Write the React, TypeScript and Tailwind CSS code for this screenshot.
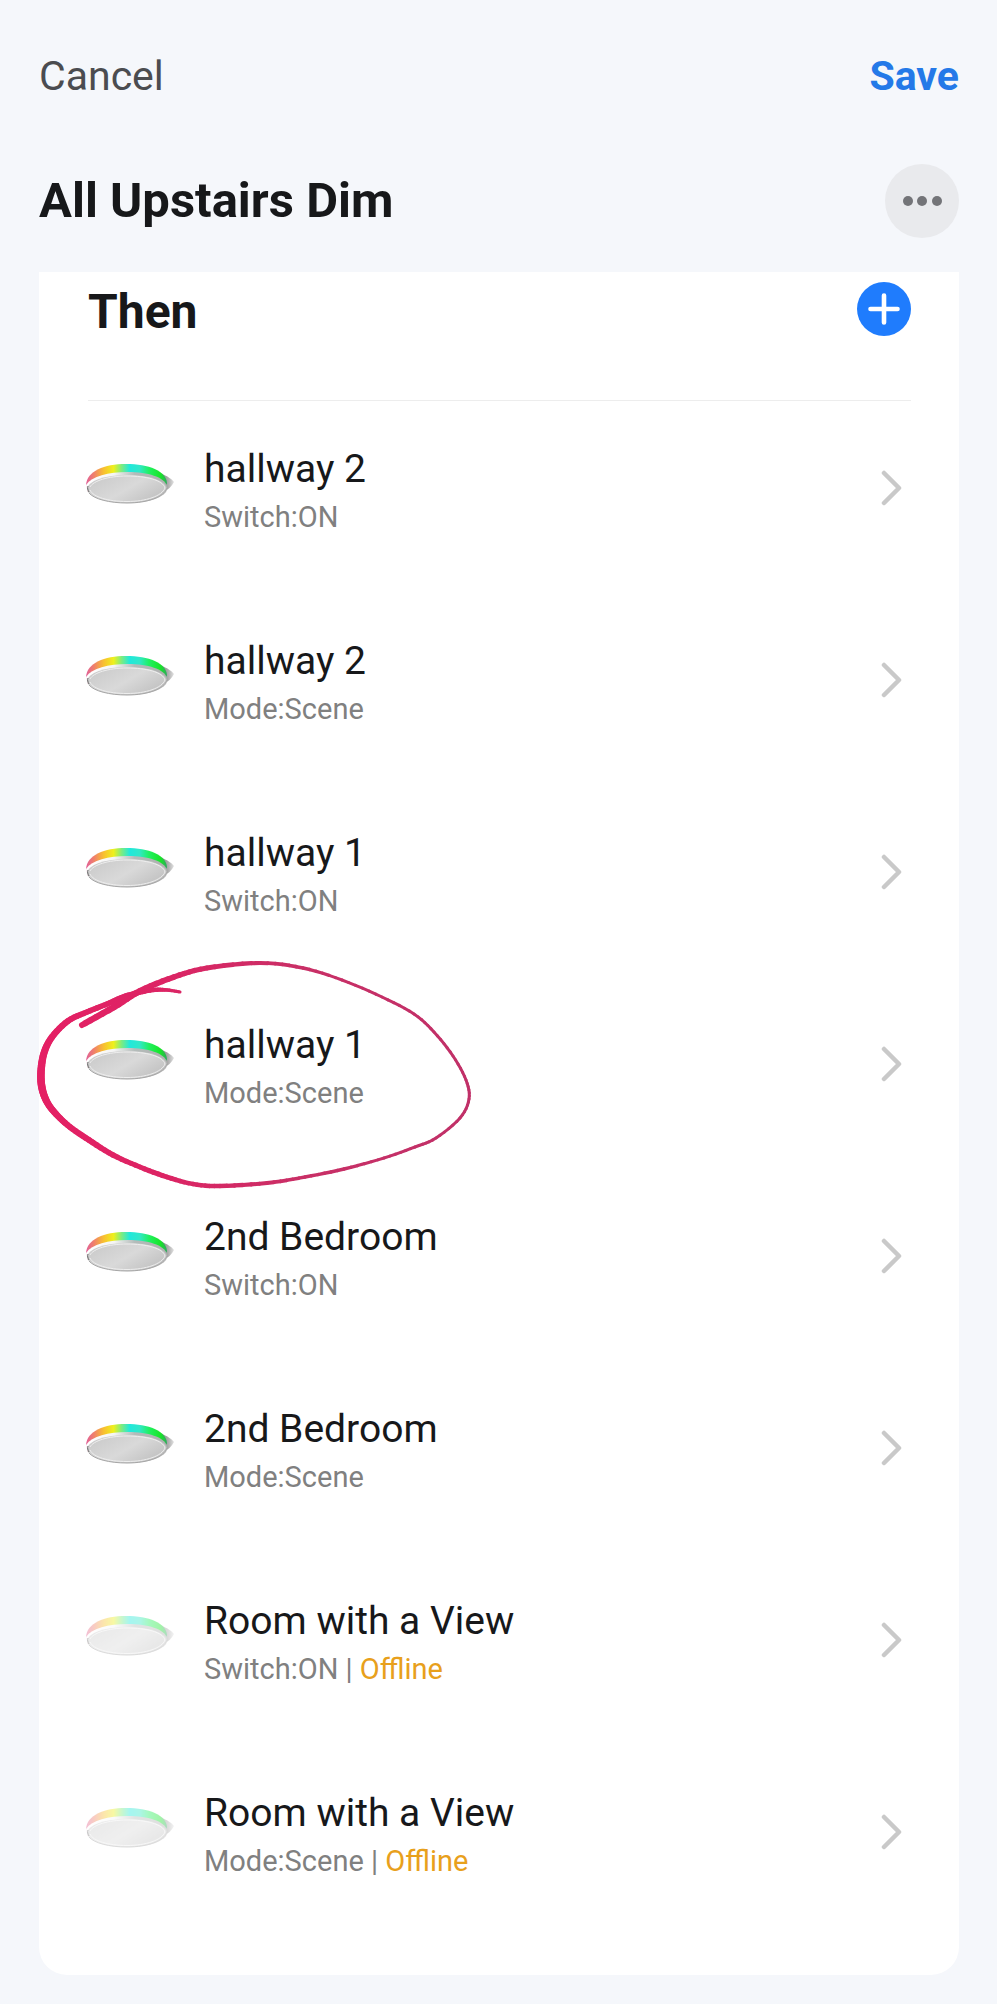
import { useId } from 'react';

interface SceneAction {
  id: number;
  device: string;
  action: string;
  offline?: boolean;
  circled?: boolean;
}

const ACTIONS: SceneAction[] = [
  { id: 1, device: 'hallway 2', action: 'Switch:ON' },
  { id: 2, device: 'hallway 2', action: 'Mode:Scene' },
  { id: 3, device: 'hallway 1', action: 'Switch:ON' },
  { id: 4, device: 'hallway 1', action: 'Mode:Scene', circled: true },
  { id: 5, device: '2nd Bedroom', action: 'Switch:ON' },
  { id: 6, device: '2nd Bedroom', action: 'Mode:Scene' },
  { id: 7, device: 'Room with a View', action: 'Switch:ON', offline: true },
  { id: 8, device: 'Room with a View', action: 'Mode:Scene', offline: true },
];

// Pen samples: x, y, pen width
const PEN: [number, number, number][] = [
  [150, 42, 3],
  [137, 40, 3.5],
  [123, 40, 4.5],
  [107, 43, 5],
  [93, 47, 5.5],
  [77, 54, 5.5],
  [57, 62, 5.5],
  [38, 71, 6],
  [22, 87, 6.5],
  [14, 103, 7],
  [11, 122, 7.5],
  [12, 138, 7.5],
  [17, 152, 7],
  [26, 164, 6.5],
  [40, 177, 6],
  [59, 190, 6],
  [83, 205, 5.5],
  [110, 217, 5],
  [137, 227, 5],
  [163, 234, 4.5],
  [190, 236, 4.5],
  [237, 233, 4],
  [275, 227, 3.5],
  [314, 219, 3.5],
  [354, 208, 3],
  [385, 197, 3],
  [406, 188, 3],
  [430, 168, 3],
  [439, 149, 3],
  [436, 130, 3],
  [423, 106, 3],
  [404, 82, 3],
  [384, 64, 3],
  [352, 47, 3],
  [312, 30, 3],
  [273, 18, 3.5],
  [230, 13, 4],
  [177, 18, 5],
  [144, 27, 5.5],
  [110, 41, 6],
  [84, 57, 6.5],
  [52, 75, 6],
];

const STEPS = 6;

function catmull(a: number, b: number, c: number, d: number, t: number) {
  return (
    0.5 *
    (2 * b + (c - a) * t + (2 * a - 5 * b + 4 * c - d) * t * t + (3 * b - a - 3 * c + d) * t * t * t)
  );
}

function penSamples() {
  const out: number[][] = [];
  for (let i = 0; i < PEN.length - 1; i++) {
    const p = [PEN[Math.max(i - 1, 0)], PEN[i], PEN[i + 1], PEN[Math.min(i + 2, PEN.length - 1)]];
    for (let s = 0; s < STEPS; s++) {
      out.push([0, 1, 2].map((k) => catmull(p[0][k], p[1][k], p[2][k], p[3][k], s / STEPS)));
    }
  }
  out.push([...PEN[PEN.length - 1]]);
  return out;
}

function PenCircle() {
  const pts = penSamples();
  return (
    <svg
      viewBox="0 0 450 250"
      className="pointer-events-none absolute -left-[9px] -top-[27px] h-[250px] w-[450px]"
      aria-hidden="true"
    >
      <defs>
        <linearGradient id="pen" gradientUnits="userSpaceOnUse" x1="0" y1="0" x2="450" y2="0">
          <stop offset="0" stopColor="#e51f64" />
          <stop offset="0.3" stopColor="#dc2464" />
          <stop offset="0.6" stopColor="#c92f66" />
          <stop offset="1" stopColor="#c03068" />
        </linearGradient>
      </defs>
      {pts.slice(1).map((p, i) => (
        <path
          key={i}
          d={`M${pts[i][0]} ${pts[i][1]}L${p[0]} ${p[1]}`}
          stroke="url(#pen)"
          strokeWidth={p[2]}
          strokeLinecap="round"
        />
      ))}
    </svg>
  );
}

function LampIcon({ faded }: { faded?: boolean }) {
  const id = useId();
  return (
    <svg
      viewBox="0 0 92 72"
      className={`h-[72px] w-[92px] shrink-0 ${faded ? 'opacity-40' : ''}`}
      aria-hidden="true"
    >
      <defs>
        <linearGradient id={`${id}rim`} x1="0" x2="1" y1="0" y2="0">
          <stop offset="0" stopColor="#e0609a" />
          <stop offset="0.1" stopColor="#f0806a" />
          <stop offset="0.22" stopColor="#f8c030" />
          <stop offset="0.34" stopColor="#eef01c" />
          <stop offset="0.44" stopColor="#7cec80" />
          <stop offset="0.54" stopColor="#20e8dc" />
          <stop offset="0.66" stopColor="#30e8c8" />
          <stop offset="0.78" stopColor="#20f060" />
          <stop offset="0.92" stopColor="#18e428" />
          <stop offset="1" stopColor="#30a860" />
        </linearGradient>
        <linearGradient id={`${id}plate`} x1="0" x2="1" y1="0.2" y2="0.8">
          <stop offset="0" stopColor="#cacaca" />
          <stop offset="0.5" stopColor="#d9d9d9" />
          <stop offset="1" stopColor="#bebebe" />
        </linearGradient>
        <linearGradient id={`${id}band`} x1="0" x2="1" y1="0" y2="0">
          <stop offset="0" stopColor="#ffffff" />
          <stop offset="0.35" stopColor="#f4f4f4" />
          <stop offset="0.6" stopColor="#b4bcba" />
          <stop offset="1" stopColor="#b0b0b0" />
        </linearGradient>
        <linearGradient id={`${id}shade`} x1="0" x2="1" y1="0" y2="0">
          <stop offset="0" stopColor="#8c8c8c" />
          <stop offset="0.5" stopColor="#acacac" />
          <stop offset="1" stopColor="#e2e2e2" />
        </linearGradient>
      </defs>
      <path d="M78 20C83 22 88 25 90 28C88 32 84 36 78 39Z" fill={`url(#${id}shade)`} />
      <path d="M2 31C3 17 20 10 42 10C65 10 82 17 83 29L80 38L4 38Z" fill={`url(#${id}rim)`} />
      <path
        d="M2 31C8 22 24 18 44 18C64 18 80 23 83 32C83 42 64 49 43 49C22 49 2 43 2 31Z"
        fill={`url(#${id}band)`}
      />
      <ellipse cx="43" cy="35" rx="40" ry="14" fill={`url(#${id}plate)`} />
      <path d="M5 39C10 45 25 49 43 49C64 49 80 43 83 34" fill="none" stroke="#a6a6a6" strokeWidth="1" />
      <path d="M4 32C3 34 4 36 5 38" fill="none" stroke="#666666" strokeWidth="1" />
      <path
        d="M6 36C9 43 24 47.500 43 47.500C62 47.500 78 42 81 34C79 26 62 22 43 22C24 22 9 27 6 33"
        fill="none"
        stroke="#eeeeee"
        strokeWidth="1"
      />
    </svg>
  );
}

function ActionRow({ item }: { item: SceneAction }) {
  return (
    <li className="relative">
      <button type="button" className="flex w-full items-center gap-7 pb-[58px] pl-[45px] pr-[43px] pt-11 text-left">
        <LampIcon faded={item.offline} />
        <span className="flex min-w-0 flex-1 flex-col gap-1.5">
          <span className="text-[39px] leading-[48px] text-[#17181a]">{item.device}</span>
          <span className="text-[29px] leading-[36px] text-[#808080]">
            {item.action}
            {item.offline && (
              <>
                {' | '}
                <span className="text-[#e8a01c]">Offline</span>
              </>
            )}
          </span>
        </span>
        <svg viewBox="0 0 36 40" className="h-10 w-9 shrink-0" aria-hidden="true">
          <path
            d="M4 3L19 18L4 33"
            fill="none"
            stroke="#c9c9c9"
            strokeWidth="4.500"
            strokeLinecap="round"
            strokeLinejoin="round"
          />
        </svg>
      </button>
      {item.circled && <PenCircle />}
    </li>
  );
}

export default function App() {
  return (
    <div className="min-h-screen bg-[#f5f7fb] pb-[29px] pl-[39px] pr-[38px] pt-[52px] font-['Roboto',sans-serif] text-[#17181a]">
      <header>
        <div className="flex items-center justify-between text-[41px] leading-[48px]">
          <button type="button" className="text-[#4b4c50]">
            Cancel
          </button>
          <button type="button" className="font-bold text-[#2479e8]">
            Save
          </button>
        </div>
        <div className="mt-16 flex items-center justify-between">
          <h1 className="text-[49px] font-bold leading-[56px]">All Upstairs Dim</h1>
          <button
            type="button"
            aria-label="More options"
            className="flex size-[74px] items-center justify-center rounded-full bg-[#e9eaed]"
          >
            <svg viewBox="0 0 40 10" className="h-[10px] w-10" fill="#737478" aria-hidden="true">
              <circle cx="6" cy="5" r="5" />
              <circle cx="20" cy="5" r="5" />
              <circle cx="35" cy="5" r="5" />
            </svg>
          </button>
        </div>
      </header>

      <main className="mt-[34px] rounded-b-[28px] bg-white pb-[38px] pt-[10px]">
        <div className="ml-[49px] mr-12 flex items-start justify-between border-b border-[#ededed] pb-[58px]">
          <h2 className="text-[48px] font-bold leading-[60px]">Then</h2>
          <button
            type="button"
            aria-label="Add action"
            className="flex size-[54px] items-center justify-center rounded-full bg-[#1f7cfd]"
          >
            <svg viewBox="0 0 32 32" className="size-8" aria-hidden="true">
              <path d="M16 2.500V29.500M2.500 16H29.500" stroke="#ffffff" strokeWidth="4.600" strokeLinecap="round" />
            </svg>
          </button>
        </div>
        <ul>
          {ACTIONS.map((item) => (
            <ActionRow key={item.id} item={item} />
          ))}
        </ul>
      </main>
    </div>
  );
}
